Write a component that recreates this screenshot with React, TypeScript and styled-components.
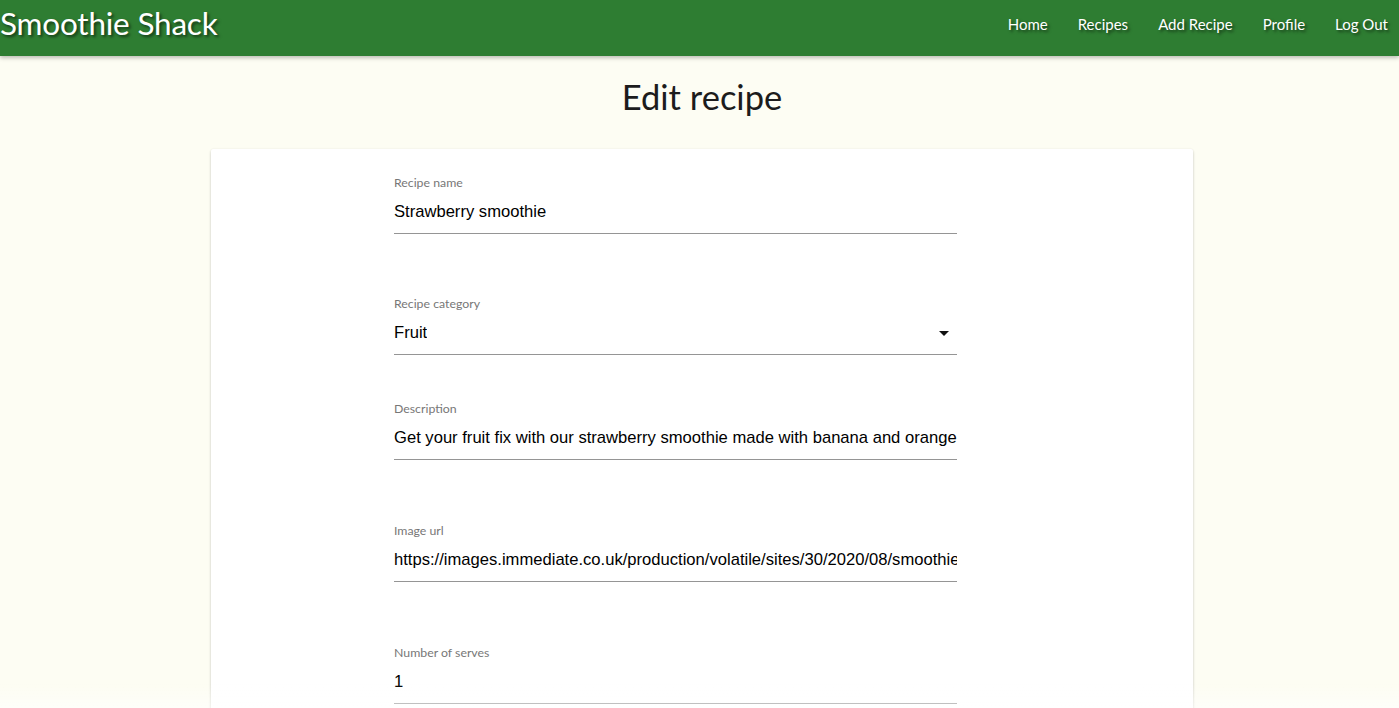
import React from "react";
import styled, { createGlobalStyle } from "styled-components";

const Global = createGlobalStyle`
  html, body { margin: 0; padding: 0; }
  body { background: #fdfdf3; font-family: Lato, "Open Sans", sans-serif; overflow: hidden; }
`;

const Nav = styled.nav`
  height: 56px;
  background: #2e7d32;
  display: flex;
  align-items: center;
  justify-content: space-between;
  box-shadow: 0 2px 4px rgba(0,0,0,0.25);
  position: relative;
  z-index: 2;
`;

const Brand = styled.a`
  font-family: Lato, sans-serif;
  font-size: 31.5px;
  color: #fff;
  text-shadow: 2px 2px 3px rgba(0,0,0,0.55);
  line-height: 1;
  margin-top: -9px;
  letter-spacing: -0.2px;
`;

const Links = styled.ul`
  list-style: none;
  display: flex;
  margin: -8px 11px 0 0;
  padding: 0;
  gap: 30px;
`;

const LinkItem = styled.li`
  font-size: 15px;
  color: #fff;
  text-shadow: 2px 2px 3px rgba(0,0,0,0.55);
`;

const Title = styled.h1`
  font-family: Lato, sans-serif;
  font-weight: 400;
  font-size: 34.5px;
  color: #1c1c1c;
  text-align: center;
  margin: 19px 0 0 5px;
  line-height: 44px;
`;

const Card = styled.div`
  width: 982px;
  margin: 30px 0 0 211px;
  background: #fff;
  box-shadow: 0 2px 3px rgba(0,0,0,0.18), 0 0 2px rgba(0,0,0,0.08);
  padding: 27px 0 40px 183px;
  box-sizing: border-box;
  min-height: 700px;
  border-radius: 2px;
`;

const Field = styled.div<{ $gap: number }>`
  width: 563px;
  margin-bottom: ${(p) => p.$gap}px;
`;

const Label = styled.label`
  display: block;
  font-family: Lato, sans-serif;
  font-size: 12.3px;
  color: #777777;
  line-height: 14px;
`;

const Value = styled.div`
  display: flex;
  align-items: flex-start;
  justify-content: space-between;
  margin-top: 8px;
  height: 36px;
  padding-top: 4px;
  border-bottom: 1px solid #959595;
  font-family: "Liberation Sans", Arial, sans-serif;
  font-size: 16.6px;
  line-height: 20px;
  color: #000;
  white-space: nowrap;
  overflow: hidden;
  box-sizing: border-box;
`;

const Text = styled.span`
  overflow: hidden;
  min-width: 0;
`;

const Arrow = styled.span`
  flex: none;
  width: 0;
  height: 0;
  margin-top: 8px;
  border-left: 5px solid transparent;
  border-right: 5px solid transparent;
  border-top: 5px solid #111;
  margin-right: 8px;
`;

const Fade = styled.div`
  position: fixed;
  left: 0;
  right: 0;
  bottom: 0;
  height: 24px;
  background: linear-gradient(to bottom, rgba(255,255,255,0), rgba(255,255,255,0.5));
  pointer-events: none;
`;

export default function App() {
  const fields = [
    { label: "Recipe name", value: "Strawberry smoothie", gap: 63 },
    { label: "Recipe category", value: "Fruit", select: true, gap: 47 },
    { label: "Description", value: "Get your fruit fix with our strawberry smoothie made with banana and orange juice", gap: 64 },
    { label: "Image url", value: "https://images.immediate.co.uk/production/volatile/sites/30/2020/08/smoothie-strawberry.jpg", gap: 64 },
    { label: "Number of serves", value: "1", gap: 64 },
  ];
  return (
    <>
      <Global />
      <Nav>
        <Brand>Smoothie Shack</Brand>
        <Links>
          {["Home", "Recipes", "Add Recipe", "Profile", "Log Out"].map((l) => (
            <LinkItem key={l}>{l}</LinkItem>
          ))}
        </Links>
      </Nav>
      <Title>Edit recipe</Title>
      <Card>
        {fields.map((f) => (
          <Field key={f.label} $gap={f.gap}>
            <Label>{f.label}</Label>
            <Value>
              <Text>{f.value}</Text>
              {f.select && <Arrow />}
            </Value>
          </Field>
        ))}
      </Card>
      <Fade />
    </>
  );
}
